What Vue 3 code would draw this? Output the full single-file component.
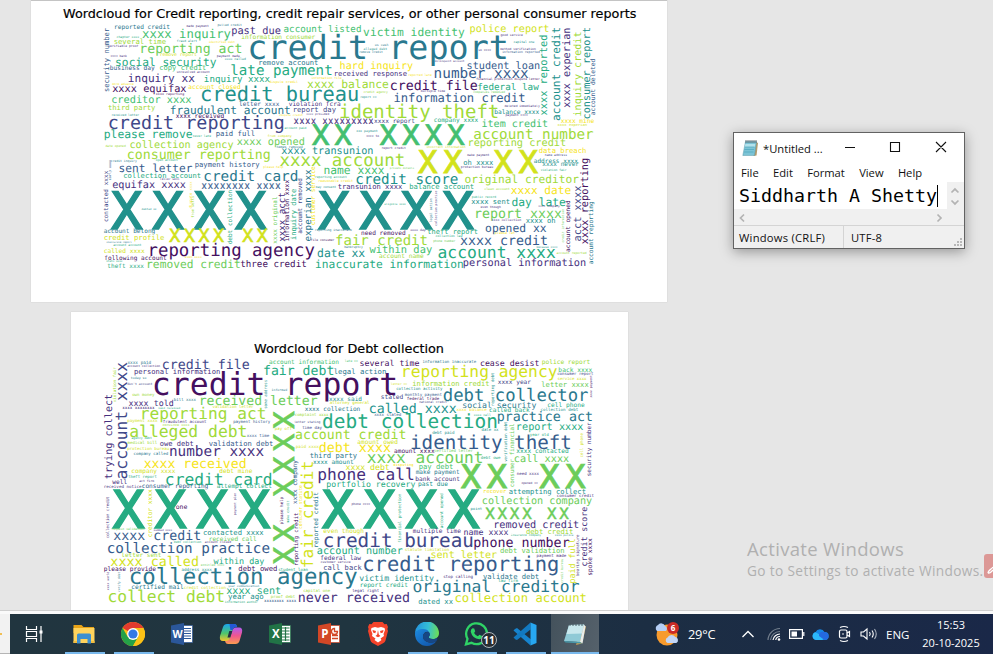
<script setup>
const palette = {
  a: '#45105f', b: '#46307e', c: '#3f4889', d: '#365c8d', e: '#2a788e', f: '#21918c',
  g: '#25ab82', h: '#44bf70', i: '#6ccd5a', j: '#a0da39', k: '#d2e21b', l: '#f6e420',
}

// Each entry: text | left | baseline | visible length | colour key.
// Vertical entries read upwards: text | baseline x | bottom | length | colour key.
const creditTop = `reported credit|58|86|166|e
made payment|275|81|66|b
pulled credit|368|79|72|e
xxxx inquiry|143|113|263|h
past due|410|103|146|b
account listed|567|96|231|h
victim identity|806|108|302|h
police report|1125|97|237|k
information consumer|440|116|220|j
chapter xxxx|65|114|67|g
several time|57|132|155|j
fraud alert|246|125|60|f
identified debt|342|130|78|l
credit report|462|178|775|e
good service|1217|109|66|b
us cash|840|137|40|e
alleged debt|806|149|70|f
remove credit|793|159|70|e
verifiable proof|40|141|90|b
reporting act|135|159|305|i
capital one|1256|129|62|f
so xxxx|1150|152|38|b
method verification|1216|150|106|b
information reported|1222|160|112|d
payment made|366|172|68|b
xxxx called|390|181|62|f
remove report|195|168|110|k
xxxx bank|47|171|48|b
social security|62|197|301|g
remove account|491|194|178|e
hard inquiry|735|208|218|l
delinquent account|1020|186|88|b
student loan|1116|206|218|d
business day|45|209|133|d
copy credit|194|211|139|h
unresolved account|246|218|98|b
late payment|408|225|303|g
received response|717|229|218|b
reported late|940|229|70|l
number xxxx|1018|234|281|d
inquiry xx|100|246|198|b
inquiry xxxx|328|246|196|g
information file|650|236|90|l
dispute credit|523|248|86|l
xxxx balance|638|263|242|j
credit file|886|270|260|a
financial protection dispute letter|1144|241|190|a
federal law|1148|270|182|g
xxxx equifax|53|277|220|a
more advance|52|254|64|l
account closed|281|267|155|l
credit bureau|318|304|472|f
xxxx reporting|183|284|84|a
credit agency|806|279|72|j
multiple time|978|276|72|b
companies remedied|1135|279|95|i
report xx|796|294|48|f
information credit|897|305|393|d
creditor xxxx|50|309|238|h
letter xxxx|433|318|119|d
violation fcra|582|317|154|b
deleted immediately|1229|320|105|b
third party|40|331|140|j
fraudulent account|226|341|360|e
report day|594|336|128|c
identity theft|735|354|475|j
balance xxxx|1199|342|133|f
payment xxxx|1232|349|66|b
received letter|50|347|82|f
xxxx received|243|354|144|a
dispute credit|553|349|70|l
xxxx provided|634|346|68|b
credit reporting|41|388|526|c
xxxx xxxxxxxxx|597|373|238|b
xxxx report|838|368|121|c
company xxxx|1017|365|132|g
item credit|1161|381|197|h
xxxx mine|1398|370|99|l
xxxx experian|1388|378|88|k
account paid|569|387|65|g
xx xxxx|650|436|460|h
account number|1137|417|357|j
please remove|28|413|263|g
never late|294|410|54|g
paid full|363|409|116|d
from company|518|411|72|k
xxx payment|784|395|64|f
xxxx to|814|412|38|b`
const creditTopV = `security number|42|275|190|d
xxxx reported|1357|345|240|g
account credit|1396|361|279|f
xxxx experian|1424|322|238|b
inquiry credit|1458|348|252|j
consumer report|1486|357|274|f
account deleted|1499|345|168|d`
const creditLow = `xxxx opened|427|29|201|i
collection agency|105|39|309|j
date opened|32|36|60|j
consumer reporting|97|73|428|j
credit inquiry|48|82|77|e
open account|183|78|65|g
xxxx transunion|560|57|274|f
names removed|545|38|78|e
xxxx account|556|93|372|j
report credit|860|43|72|b
incorrect information|995|39|116|k
reporting credit|1119|34|293|j
data breach|1332|53|141|l
xx xx|968|113|362|k
make payment|1117|63|66|b
name address|1350|63|66|c
oh xxxx|1106|90|88|f
protection bureau|1098|98|96|b
address xxxx|1317|84|131|f
xxxx never|1343|94|108|f
violation fair|1338|109|76|g
sent letter|72|111|219|d
payment history|300|97|193|d
please help|505|100|60|l
credit card|327|138|281|e
private details|885|101|72|i
name xxxx|687|116|180|h
collection account|86|128|231|g
letter sent|195|136|58|b
reporting account|660|128|95|g
reasonable credit|670|140|104|l
credit score|783|148|305|f
original creditor|1110|145|340|j
equifax xxxx|53|158|218|b
xxxxxxxx xxxx|320|161|236|d
transunion xxxx|729|163|192|b
may consent|663|158|60|f
balance account|944|163|192|g
clean account|1168|166|76|j
xxxx date|1249|176|178|l
xxxx|45|282|472|f
xxxx|667|282|471|f
debted xx|140|226|44|f
eligible xxxx|868|209|64|g
public record|1131|188|72|g
xxxx sent|1130|208|114|f
day late|1251|212|160|g
even though|1157|220|60|b
xxxx company|1330|215|64|b
report xxxx|1139|249|260|i
xxxx collection|1190|258|88|b
xxxx oh|1293|264|88|f
opened xx|1172|290|181|d
account belong|27|294|153|e
xxxx xx|222|320|297|k
credit profile|27|315|180|k
inaccurate report|34|324|76|e
account account|55|334|84|g
called xxxx|27|353|121|k
reporting agency|160|362|497|a
following account|29|374|185|a
theft xxxx|38|399|108|g
removed credit|155|399|281|i
three credit|437|396|197|a
state xxxx|34|381|48|g
even xxxx|270|368|50|l
reporting inaccurate|660|289|110|e
need removed|799|299|132|a
xxxx day|946|289|46|b
theft report|998|297|150|g
please let|1200|298|60|l
fair credit|722|330|275|j
file consumer|648|317|70|a
phone number|1015|321|66|i
collection law|1022|306|80|g
xxxx credit|1097|331|260|d
bankruptcy|748|338|55|e
date xx|668|365|141|f
within day|825|355|185|h
account name|853|370|132|j
inaccurate information|662|400|443|g
account xxxx|1030|368|350|g
personal information|1105|393|367|b
account reported|1385|358|90|j
because xxxx|1325|338|62|f`
const creditLowV = `contacted xxxx|40|260|152|c
early xxxx|47|135|60|d
dispute xxxx|290|220|80|l
from wells|297|248|65|j
debt collection|410|327|162|g
xxxx original|545|325|140|i
xxxx acct|569|319|146|b
information xxxx|582|318|183|a
inquiry date|602|314|152|g
account removed|620|295|165|c
experian xxxx|648|318|213|e
customer service|660|270|175|l
legal action|1012|262|72|e
collection practice|1026|272|105|b
account opened|1425|350|153|a
credit information|1408|322|100|i
acct xxxx|1459|318|165|c
xxxx reporting|1478|326|256|a
account reporting|1494|387|187|e`
const debtTop = `xxxx paid|98|72|70|e
account collection|97|81|98|b
credit file|202|87|260|c
personal information|118|103|257|b
account information|523|71|208|h
late xx|750|67|38|h
several time|795|77|177|a
information inaccurate|983|69|160|e
cease desist|1156|77|176|a
police report|1341|72|144|j
credit report|175|164|730|a
fair debt|506|106|210|g
legal action|717|101|156|e
reporting agency|920|110|465|k
back xxxx|1391|95|100|h
consumer report|1387|104|108|c
today so|108|116|46|e
don't account|97|135|75|c
own money|112|168|66|j
informed|530|152|46|e
letter xx|888|134|48|k
information credit|953|138|230|j
collection activity|904|150|138|f
service xxxx|1388|121|86|k
xxxx year|1209|133|98|c
letter xxxx|1340|140|140|i
monthly payment|930|167|110|d
stated|858|178|66|c
federal trade|936|180|96|a
debt collector|1046|182|432|e
xxxx told|102|197|133|b
bill xxxx|237|184|65|e
received letter|313|196|353|i
xxxx said|703|182|97|f
attorney general|705|192|118|k
national credit|973|190|82|c
xxxx xxxxxxxx|83|206|95|b
validation letter|353|205|122|k
said received|190|206|65|g
reporting act|137|238|375|j
xxxx collection|630|213|165|e
called xxxx|823|219|260|f
social security|1103|204|220|e
cell phone|1358|202|110|g
xxxx balance|1085|214|90|l
called back|1183|216|120|g
collection debt|1337|214|112|f
xxxx stated|838|228|80|d
xxxx call|1137|229|50|g
debt collection|684|265|522|g
practice act|1207|243|285|e
complaint xxxx|600|227|100|j
payment xxxx|97|246|90|k
fraudulent account|204|248|130|b
payment history|415|249|110|d
letter stating|598|248|78|c
time day|622|267|58|c
convince xxxx|203|257|80|j
date xx|1160|274|50|f
report xxxx|1264|270|200|g
alleged debt|105|292|350|j
xxxx time|456|290|66|d
pay off|540|271|50|k
account credit|602|298|330|j
debt paid|1012|282|66|f
identity theft|948|326|480|d
year old|1305|287|56|g
amount owed|788|311|120|k
debt xxxx|673|336|213|l
medical bill|98|313|88|j
owe debt|195|318|100|b
validation debt|342|317|192|d
agency debt|110|297|60|g
protection bureau|97|331|125|k
company called|116|345|103|e
number xxxx|224|349|281|b
amount xxxx|898|338|120|a
certified letter|1018|335|115|i
xxxx contacted|1265|339|155|g
paid xxxx|603|325|68|k
xxxx received|148|384|305|l
third party|645|355|140|e
xxxx account|818|368|345|i
call xxxx|1258|367|163|i
debt owe|1158|356|58|g
xxxx amount|655|373|120|f
xxxx debt|753|390|130|k
pay debt|972|386|102|h
disputing|895|378|60|l
company xxxx|110|398|130|k
debt mine|374|400|97|k
make payment|963|403|130|e
phone call|669|421|288|b
xx xx|1096|443|377|i`
const debtTopV = `trying collect|50|416|253|b
account xxxx|97|416|348|c
violation fair|63|186|104|j
some address|517|206|86|f
reporting debt|1196|198|100|f
verification debt|1237|365|120|f
consumer financial|1256|441|190|i
security number|1489|408|160|b
xxxx payment|1492|172|66|a
cell phone|1463|352|72|k
xx xxxx|597|674|461|i`
const debtLow = `credit card|212|38|318|g
theft report|100|19|85|g
act firm|133|31|44|b
well|53|37|43|b
received notice|27|48|112|b
consumer reporting|141|47|198|d
attempt collect|366|47|164|g
portfolio recovery|695|46|265|g
past due|970|43|88|f
bank account|962|28|132|b
need xxxx|1266|9|65|b
opened xx|1280|37|48|b
recover|1165|63|68|l
attempting collect|1242|66|230|f
consumer credit|1386|76|110|b
xxxx|50|167|478|g
xxxx|678|167|477|g
one|243|112|33|a
phone xxxx|770|100|55|b
point|1127|115|34|f
collection company|1162|97|328|i
xxxx xx|1170|142|252|i
removed credit|1196|168|255|b
request validation|50|175|98|i
summed xxxx|176|177|55|b
xxxx credit|57|205|260|d
contacted xxxx|325|190|180|f
received call|342|207|142|i
even though|686|184|120|k
multiple time|954|183|143|b
name xxxx|1107|188|132|b
debt credit|1294|186|140|j
insurance company|1248|193|90|g
xxxx police|1380|192|55|f
debt collection|237|213|82|g
account closed|330|213|78|b
collection practice|37|242|486|d
credit bureau|686|224|448|c
statute limitation|930|237|132|k
phone number|1137|225|285|a
letter sent|80|256|118|j
xxxx called|48|281|262|k
within day|357|275|150|g
account number|667|247|255|g
federal law|677|263|120|b
customer service|677|272|90|b
sent letter|1008|257|197|k
debt validation|1216|242|192|i
payment made|1325|254|88|b
please provide|27|296|155|a
address xxxx|260|296|90|f
debt owed|431|298|115|a
student loan|550|297|88|g
entitled xxxx|318|281|70|i
call back|686|293|113|c
credit reporting|805|296|585|d
collection agency|105|337|680|e
victim identity|794|326|222|f
stop calling|1045|318|88|b
validate debt|1165|320|166|e
law firm|1210|331|58|g
certified mail|110|350|155|e
credit collection|267|350|125|k
your communication|400|345|92|e
report credit|795|345|143|g
xxxx sent|395|365|162|g
capital one|625|359|80|j
legal right|772|359|80|b
original creditor|955|361|496|e
collect debt|40|391|348|j
year ago|400|382|105|f
proof debt|528|377|72|j
never received|610|390|333|b
dated xx|971|395|102|f
collection account|1080|391|394|k
information author|390|394|98|g
xxxxxxxx xxxx|508|390|95|d`
const debtLowV = `collection credit|42|198|124|b
creditor xxxx|171|195|142|k
payment plan|422|129|66|b
please help|565|157|82|a
make credit|583|152|66|g
reporting credit|608|281|158|a
xxxx company|606|95|130|d
consumer statute|620|170|130|l
fair credit|655|286|317|k
reported credit|668|226|165|e
financial protection|918|212|146|g
account opened|1044|168|104|g
credit score|1477|282|176|b
paid full|1441|333|132|k
bearing signature|1452|312|124|b
spoke xxxx|1492|310|110|a
credit bureau|1405|332|72|i
xxxx world|42|354|55|b
verify debt|75|360|60|e`

function place(source, dy, vertical) {
  return source.split('\n').map((line) => {
    const [text, x, y, w, c] = line.split('|')
    const narrow = /^[x ]+$/.test(text)
    const size = +w / (0.602 * text.length - (narrow ? 0.12 : 0.1))
    const squeeze = narrow ? 0.86 : 1
    const lead = size * (narrow ? 0.016 : 0.05)
    const px = vertical ? +x : +x - lead
    const py = vertical ? +y + dy + lead : +y + dy
    return {
      text,
      size: size.toFixed(2),
      spacing: narrow ? (0.602 * size * (1 / squeeze - 1)).toFixed(2) : 0,
      fill: palette[c],
      weight: narrow ? (size * 0.02).toFixed(2) : 0,
      transform: `translate(${px.toFixed(1)} ${py.toFixed(1)})${vertical ? ' rotate(-90)' : ''} scale(${squeeze} 1)`,
    }
  })
}

const clouds = [
  {
    id: 'credit', title: 'Wordcloud for Credit reporting, credit repair services, or other personal consumer reports',
    x: -96, y: 54, length: 1720,
    words: [...place(creditTop, 0), ...place(creditTopV, 0, true), ...place(creditLow, 405), ...place(creditLowV, 405, true)],
  },
  {
    id: 'debt', title: 'Wordcloud for Debt collection',
    x: 477, y: 39, length: 570,
    words: [...place(debtTop, 0), ...place(debtTopV, 0, true), ...place(debtLow, 396), ...place(debtLowV, 396, true)],
  },
]
</script>

<template>
  <div class="desktop">
    <main class="document">
      <section v-for="c in clouds" :key="c.id" class="card" :class="c.id">
        <svg class="cloud" viewBox="0 0 1560 810">
          <text class="title" :x="c.x" :y="c.y" :textLength="c.length" lengthAdjust="spacingAndGlyphs">{{ c.title }}</text>
          <text v-for="(w, i) in c.words" :key="i" class="word" :transform="w.transform" :font-size="w.size" :letter-spacing="w.spacing" :fill="w.fill" :stroke="w.fill" :stroke-width="w.weight">{{ w.text }}</text>
        </svg>
      </section>
    </main>

    <aside class="watermark">
      <div class="wm-title">Activate Windows</div>
      <div class="wm-sub">Go to Settings to activate Windows.</div>
    </aside>
    <div class="red-tab">
      <svg width="9" height="24" viewBox="0 0 9 24"><path d="M4 19c0-3 3-3 5-6M4 19c2 1 3-1 5-3" fill="none" stroke="#fff" stroke-width="1.3" /></svg>
    </div>

    <section class="notepad">
      <header class="np-title">
        <svg class="np-icon" width="17" height="18" viewBox="0 0 17 18">
          <path d="M14 3l2 1-1.500 12.500-3 .5z" fill="#b59a6b" />
          <path d="M3.500 2.500h11L12.500 16.500H.8z" fill="#7cc4d6" stroke="#5a9aaa" stroke-width=".5" />
          <path d="M3.300 5h10l-.5 3H2.800z" fill="#b4e2ec" />
          <path d="M3 8h9.500M2.500 10.500H12M2 13h9.500" stroke="#4fa6bc" stroke-width=".7" />
          <path d="M4 1v3M6 1v3M8 1v3M10 1v3M12 1v3M14 1v3" stroke="#59656b" stroke-width=".9" />
        </svg>
        <span class="np-name">*Untitled ...</span>
        <svg class="np-controls" width="106" height="14" viewBox="0 0 106 14">
          <path d="M3 6.500h10M48.500 1.500h9v9h-9zM94 1l10 10M104 1L94 11" fill="none" stroke="#111" stroke-width="1.100" />
        </svg>
      </header>
      <nav class="np-menu"><span>File</span><span>Edit</span><span>Format</span><span>View</span><span>Help</span></nav>
      <div class="np-body">
        <div class="np-text">Siddharth A Shetty<i class="caret"></i></div>
        <svg width="17" height="26" viewBox="0 0 17 26"><path d="M4.500 10.500l3.500-3.500 3.500 3.500M4.500 18.500L8 22l3.500-3.500" fill="none" stroke="#b3b3b3" stroke-width="1.700" /></svg>
      </div>
      <div class="np-scroll">
        <svg width="230" height="16" viewBox="0 0 230 16"><path d="M10 5.500L6.500 9l3.500 3.500M203.500 5.500L207 9l-3.500 3.500" fill="none" stroke="#b3b3b3" stroke-width="1.700" /></svg>
      </div>
      <footer class="np-status">
        <span class="enc">Windows (CRLF)</span><span class="utf">UTF-8</span>
        <svg class="grip" width="9" height="9" viewBox="0 0 9 9"><path d="M6 0h2v2H6zM3 3h2v2H3zM6 3h2v2H6zM0 6h2v2H0zM3 6h2v2H3zM6 6h2v2H6z" fill="#b8b8b8" /></svg>
      </footer>
    </section>

    <div class="divider"></div>
    <footer class="taskbar">
      <div class="search-end"><i></i></div>
      <div class="app">
        <svg width="24" height="24" viewBox="0 0 24 24" fill="none" stroke="#fff" stroke-width="1.200">
          <path d="M3.500 4v3.500h10V4M3.500 20v-3.500h10V20M3.500 9.500h10v5h-10zM18 4v16" /><rect x="16.500" y="8.500" width="3" height="3" fill="#fff" stroke="none" />
        </svg>
      </div>
      <div class="app open">
        <svg width="24" height="24" viewBox="0 0 24 24">
          <path d="M1.500 3h8l2 2H22v6H1.500z" fill="#e8a317" /><path d="M1.500 6h21v15h-21z" fill="#ffd35c" />
          <path d="M5 13q0-1.500 1.500-1.500h11Q19 11.500 19 13v8.500h-3.500v-4.500h-7v4.500H5z" fill="#3c8fd0" /><path d="M1.500 19h3.500v2H1.500zM19 19h3.500v2H19z" fill="#f1bd3f" />
        </svg>
      </div>
      <div class="app open">
        <svg width="24" height="24" viewBox="0 0 24 24">
          <circle cx="12" cy="12" r="12" fill="#fbc116" />
          <path d="M12 12L1.600 6A12 12 0 0 1 22.400 6z" fill="#e33b2e" />
          <path d="M1.600 6A12 12 0 0 0 12 24l5.200-9L12 12 6.800 15z" fill="#24a148" />
          <path d="M22.400 6H12v6l5.200 3L12 24A12 12 0 0 0 22.400 6z" fill="#fbc116" />
          <circle cx="12" cy="12" r="5.900" fill="#fff" /><circle cx="12" cy="12" r="4.600" fill="#3478e5" />
        </svg>
      </div>
      <div class="app">
        <svg width="24" height="24" viewBox="0 0 24 24">
          <path d="M12 3.500h10.500v17H12z" fill="#fff" stroke="#2b579a" stroke-width=".7" /><path d="M14 6.500h7M14 9h7M14 11.500h7M14 14h7M14 16.500h7" stroke="#2b579a" stroke-width="1.200" />
          <path d="M1 3.500L14 1v22L1 20.500z" fill="#2b579a" /><text class="letter" x="2.600" y="16" font-size="10.500">W</text>
        </svg>
      </div>
      <div class="app">
        <svg width="24" height="24" viewBox="0 0 24 24">
          <defs>
            <linearGradient id="cpa" x1="0" y1="0" x2="0" y2="1"><stop offset="0" stop-color="#1aa5ee" /><stop offset=".55" stop-color="#4ec56d" /><stop offset="1" stop-color="#f5c62c" /></linearGradient>
            <linearGradient id="cpb" x1="0" y1="0" x2="0" y2="1"><stop offset="0" stop-color="#b05cf0" /><stop offset=".5" stop-color="#f0568f" /><stop offset="1" stop-color="#fc9d50" /></linearGradient>
          </defs>
          <path d="M16.500 22H9q-2 0-2.700-2L6 18h2q2.300 0 3-2.500L13.500 8q.8-2.500 3-2.500H20q4 0 3 5l-2.500 8.500q-1 3-4 3z" fill="url(#cpb)" />
          <path d="M8 2h7.500q2 0 2.700 3h-1.500q-2.500 0-3.300 3l-2.200 7.500Q10.300 19 7 19H4q-4 0-3-5L4 5q1-3 4-3z" fill="url(#cpa)" />
          <path d="M10.500 2h5q2 0 2.700 3h-1.500q-2.500 0-3.300 3h-2z" fill="#2458d6" /><path d="M10.300 9h3l-2 6.500H8.500z" fill="#253044" />
        </svg>
      </div>
      <div class="app">
        <svg width="24" height="24" viewBox="0 0 24 24">
          <path d="M12 3.500h10.500v17H12z" fill="#fff" stroke="#217346" stroke-width=".7" /><path d="M14 6h7.500M14 9h7.500M14 12h7.500M14 15h7.500M14 18h7.500M17.500 5v14" stroke="#217346" stroke-width="1.200" />
          <path d="M1 3.500L14 1v22L1 20.500z" fill="#217346" /><text class="letter" x="4" y="16" font-size="11.500">X</text>
        </svg>
      </div>
      <div class="app">
        <svg width="24" height="24" viewBox="0 0 24 24">
          <path d="M12 3.500h10.500v17H12z" fill="#fff" stroke="#d24726" stroke-width=".7" /><path d="M15 13.500h6M15 16.500h6M20.500 9.500A3 3 0 1 1 17.500 6.500v3z" fill="none" stroke="#d24726" stroke-width="1.300" />
          <path d="M1 3.500L14 1v22L1 20.500z" fill="#d24726" /><text class="letter" x="4.300" y="16" font-size="11.500">P</text>
        </svg>
      </div>
      <div class="app">
        <svg width="24" height="24" viewBox="0 0 24 24">
          <path d="M7.500 0h9l2 2.200 2.200-.2 1.300 3-.6 2 .6 2-2.500 9.500q-.5 1.500-2 2.500L12 24l-5.500-3q-1.500-1-2-2.500L2 9l.6-2L2 5l1.300-3 2.200.2z" fill="#f4432a" />
          <path d="M5.500 6l3.500-1 3 .7L15 5l3.500 1 .5 2-1.500 4 .5 2-3.500 2.500 1 1.500-3.500 2.500L8.500 18l1-1.500L6 14l.5-2L5 8z" fill="#fff" />
          <path d="M6.500 8l3.500 1-.7 2.200L7 10.500zM17.500 8L14 9l.7 2.200 2.300-.7zM12 8l.8 4.500 1.700 1.500-2.500 1.300L9.500 14l1.700-1.500z" fill="#f4432a" />
        </svg>
      </div>
      <div class="app open">
        <svg width="24" height="24" viewBox="0 0 24 24">
          <defs>
            <linearGradient id="eg" x1="0" y1=".3" x2="1" y2=".4"><stop offset="0" stop-color="#2292df" /><stop offset=".55" stop-color="#35bfd5" /><stop offset="1" stop-color="#6cdd58" /></linearGradient>
            <linearGradient id="eb" x1="0" y1="0" x2="1" y2="1"><stop offset="0" stop-color="#1d8be0" /><stop offset="1" stop-color="#104fa4" /></linearGradient>
          </defs>
          <path d="M0 12A12 12 0 0 1 24 11c0 4-3 6-6 6-3.500 0-5-1-4-2.500 2-3-1-6.500-5-6.500C4 8 0 10 0 12z" fill="url(#eg)" />
          <path d="M0 12c0-3 4-5 8-5 3 0 5 1 6 3-3-1-6 1-6 4.500 0 5 7 8 13.500 4.500C19 22.500 15.500 24 12 24A12 12 0 0 1 0 12z" fill="url(#eb)" />
          <path d="M8 14.500C8 11.500 10.500 9.500 14 10c1.500 2 1 3.500 0 4.500-1 1.500.5 2.500 4 2.500 1.500 0 3-.5 4.200-1.300q.6 1.300-.7 3.300C15 22.500 8 19.500 8 14.500z" fill="#174785" />
        </svg>
      </div>
      <div class="app open">
        <svg width="24" height="24" viewBox="0 0 24 24">
          <path d="M2 22.300l1.500-5.500A10.400 10.400 0 1 1 7.500 20.800z" fill="none" stroke="#2fd366" stroke-width="2.300" />
          <path d="M8.500 6.300l1.700.2 1 2.800-1.100 1.600q1.300 2.300 3.800 3.300l1.500-1.500 2.700 1.300q.2 3-2.900 3.300Q8.500 16.500 6.700 9.700q0-2.400 1.800-3.400z" fill="#2fd366" />
        </svg>
        <b class="badge">11</b>
      </div>
      <div class="app open">
        <svg width="24" height="24" viewBox="0 0 24 24">
          <path d="M2 7l2-1 14 11.500-.5 6L.5 8.500z" fill="#1683ce" />
          <path d="M17.500.5v7L4 18l-1.500-.5-2-2z" fill="#1279c1" />
          <path d="M17.500.5L23.500 3v18l-6 2.500z" fill="#27a7f1" />
        </svg>
      </div>
      <div class="app open active">
        <svg width="26" height="24" viewBox="0 0 26 24">
          <path d="M20 3l4 1.500-4 17-6 1.500z" fill="#c59c53" />
          <path d="M7 3l15-.5-4 17.500-16-1z" fill="#90cad6" /><path d="M7 3l15-.5-2 9L4.500 12z" fill="#c9e8ed" /><path d="M22 2.500l1.500 2-3 17L18 20z" fill="#e9edeb" />
          <path d="M2 19l16 1 2.500 1.500-17-1z" fill="#4899aa" /><path d="M8 2v2M11 2v2M14 2v2M17 2v2M20 2v2" stroke="#4c6068" />
        </svg>
      </div>

      <div class="tray">
        <svg class="weather" width="26" height="26" viewBox="0 0 26 26">
          <circle cx="13" cy="14" r="10.500" fill="#f79b2e" />
          <path d="M3 10a3.500 3.500 0 0 1 1-6 4 4 0 0 1 7 1 3 3 0 0 1 1 5z" fill="#b5cef5" />
          <path d="M13.500 22a3 3 0 0 1 0-5.500 4.500 4.500 0 0 1 7.800-.5 3.200 3.200 0 0 1 1 6z" fill="#c2d6f7" />
          <circle cx="19" cy="7" r="6" fill="#cb2b26" /><text class="letter" x="16.700" y="10" font-size="8">6</text>
        </svg>
        <span class="temp">29°C</span>
        <svg class="chev" width="14" height="14" viewBox="0 0 14 14"><path d="M1.500 10L7 4.500l5.500 5.500" fill="none" stroke="#fff" stroke-width="1.300" /></svg>
        <svg class="wifi" width="14" height="14" viewBox="0 0 14 14" fill="none" stroke-width="1.200"><path d="M1 13A12 12 0 0 1 13 1.500M3.500 13A9.500 9.500 0 0 1 13 4.500" stroke="#75808e" /><path d="M6 13a7 7 0 0 1 7-6M8.700 13a4.300 4.300 0 0 1 4.300-3.500" stroke="#fff" /><circle cx="12" cy="12.500" r="1.300" fill="#fff" /></svg>
        <svg class="battery" width="16" height="12" viewBox="0 0 16 12"><path d="M.6 1.600h12.800v8.800H.6zM14.800 4v4" fill="none" stroke="#fff" stroke-width="1.200" /><path d="M2.500 3.500H8v5H2.500z" fill="#fff" /></svg>
        <svg class="drive" width="17" height="13" viewBox="0 0 17 13"><path d="M4 12a4 4 0 0 1-.5-7.800A5 5 0 0 1 12.500 4a4 4 0 0 1 .5 8z" fill="#1686e4" /><path d="M3.500 4.200L12 9l-1.500 3H4a4 4 0 0 1-.5-7.800z" fill="#2cb8fa" /><path d="M7 6q2-3 5.500-2 4 .7 4 4.200 0 3.500-4 3.800L7 8z" fill="#2469e0" /></svg>
        <svg class="camera" width="14" height="18" viewBox="0 0 14 18" fill="none" stroke="#fff" stroke-width="1.200"><rect x="1.500" y="5" width="7.500" height="8" rx="1.500" /><path d="M9 8l2.500-1.500v5L9 10M2 2.500Q6 .5 10 2.500M2 15.500q4 2 8 0" /><circle cx="5" cy="9" r=".8" fill="#fff" stroke="none" /></svg>
        <svg class="speaker" width="18" height="14" viewBox="0 0 18 14" fill="none" stroke="#fff" stroke-width="1.100"><path d="M1 5h2.500L7 2v10L3.500 9H1zM9.500 5q1.500 2 0 4M12 3.500q2.500 3.500 0 7" /><path d="M14.500 2q3.500 5 0 10" stroke="#aab2be" /></svg>
        <span class="lang">ENG</span>
        <div class="clock"><span>15:53</span><span>20-10-2025</span></div>
      </div>
    </footer>
  </div>
</template>

<style>
body { margin: 0; overflow: hidden; }
</style>

<style scoped>
.desktop { position: relative; width: 993px; height: 654px; overflow: hidden; display: flex; flex-direction: column; background: #e6e6e6; font-family: "Open Sans", "Noto Sans", sans-serif; box-sizing: border-box; }
.document { height: 610px; overflow: hidden; display: flex; flex-direction: column; align-items: flex-start; gap: 10px; }
.card { background: #fff; box-sizing: border-box; box-shadow: 0 0 1px #bbb; flex: none; }
.credit { width: 636px; height: 302px; margin-left: 31px; padding-left: 64px; border-top: 1px solid #c4c4c4; }
.credit .cloud { margin-top: -1px; }
.debt { width: 557px; height: 298px; margin-left: 71px; padding: 28px 0 0 24px; }
.cloud { display: block; width: 520px; height: 270px; overflow: visible; }
.title { font-family: "DejaVu Sans", sans-serif; font-size: 36.500px; fill: #000; stroke: #000; stroke-width: .5; }
.word { font-family: "DejaVu Sans Mono", monospace; text-rendering: geometricPrecision; white-space: pre; }

.watermark { position: absolute; left: 747px; top: 536px; color: #b0b0b0; white-space: nowrap; }
.wm-title { font-size: 18.500px; line-height: 25px; letter-spacing: .33px; }
.wm-sub { font-size: 13.700px; line-height: 20px; letter-spacing: .35px; }
.red-tab { position: absolute; left: 984px; top: 554px; width: 9px; height: 24px; border-radius: 3px 0 0 3px; background: #dc9896; }

.notepad { position: absolute; left: 733px; top: 132px; width: 232px; height: 117px; box-sizing: border-box; border: 1px solid #626262; background: #f0f0f0; box-shadow: 0 3px 12px rgba(0, 0, 0, .35); display: flex; flex-direction: column; color: #111; font-size: 11.200px; }
.np-title { height: 30px; display: flex; align-items: center; background: #fff; padding-left: 8px; }
.np-name { width: 64px; margin-left: 4px; white-space: nowrap; }
.np-controls { margin-left: 15px; }
.np-menu { height: 19px; display: flex; align-items: center; gap: 14.300px; padding-left: 7px; background: #fff; }
.np-body { height: 27px; display: flex; }
.np-text { width: 214px; box-sizing: border-box; padding-left: 5px; background: #fff; font: 18.270px/27px "DejaVu Sans Mono", monospace; white-space: pre; color: #000; display: flex; align-items: center; }
.caret { width: 1px; height: 22px; background: #000; }
.np-scroll { height: 16px; }
.np-scroll svg { display: block; }
.np-status { height: 23px; border-top: 1px solid #d4d4d4; box-sizing: border-box; display: flex; align-items: stretch; line-height: 24px; position: relative; }
.enc { width: 104px; padding-left: 5px; border-right: 1px solid #d4d4d4; white-space: nowrap; letter-spacing: .25px; }
.utf { padding-left: 7px; letter-spacing: .2px; }
.grip { position: absolute; right: 1px; bottom: 1px; }

.divider { height: 4px; background: #fafafa; border-top: 1px solid #cfcfcf; box-sizing: border-box; flex: none; }
.taskbar { height: 40px; flex: none; display: flex; background: linear-gradient(90deg, #21353f, #203540 35%, #1c2e43 65%, #1a2848); color: #fff; }
.search-end { width: 10px; flex: none; box-sizing: border-box; background: #f2f2f2; border-bottom: 1px solid #b5b5b5; display: flex; align-items: center; }
.search-end i { width: 2px; height: 2px; background: #f0bf55; }
.app { width: 49px; flex: none; position: relative; display: flex; align-items: center; justify-content: center; }
.open::after { content: ""; position: absolute; bottom: 0; left: 6px; width: 40px; height: 2px; background: #79b9ed; }
.active { width: 48px; margin-left: 2px; background: linear-gradient(100deg, #44525c, #55616b); }
.active::after { left: 0; width: 48px; }
.letter { font-family: "Open Sans", sans-serif; font-weight: 700; fill: #fff; }
.badge { position: absolute; left: 30px; top: 18px; width: 16px; height: 16px; box-sizing: border-box; border: 1px solid #aeb6bc; border-radius: 50%; background: #282d32; font-size: 10px; line-height: 14px; text-align: center; }
.tray { margin-left: 55px; display: flex; align-items: center; flex: none; font-size: 12px; }
.tray svg { flex: none; }
.temp { margin-left: 8px; width: 30px; font-size: 12.800px; letter-spacing: -.2px; }
.chev { margin-left: 23px; }
.wifi { margin-left: 12px; }
.battery { margin-left: 8px; }
.drive { margin-left: 7px; }
.camera { margin-left: 9px; }
.speaker { margin-left: 8px; }
.lang { margin-left: 8px; width: 24px; font-size: 11.500px; }
.clock { margin-left: 11px; width: 60px; display: flex; flex-direction: column; align-items: center; font-size: 11px; line-height: 18px; white-space: nowrap; }
</style>
